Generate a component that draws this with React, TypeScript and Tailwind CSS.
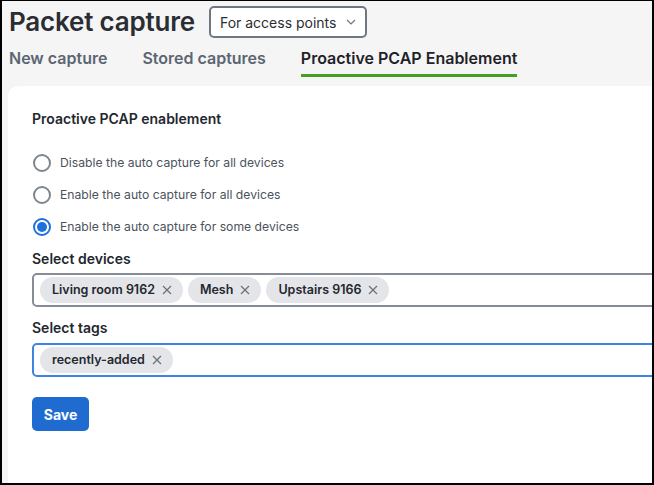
import React from "react";

const font = { fontFamily: "Inter, 'Noto Sans', sans-serif" };

const Chip = ({ label }: { label: string }) => (
  <span className="flex items-center h-[26px] pl-[12px] pr-[11px] gap-[7px] rounded-full bg-[#e3e5e8] text-[12.5px] font-semibold text-[#23272e]">
    {label}
    <svg width="10" height="10" viewBox="0 0 10 10" className="text-[#6b7178]">
      <path d="M1 1L9 9M9 1L1 9" stroke="currentColor" strokeWidth="1.2" />
    </svg>
  </span>
);

const Radio = ({ label, checked }: { label: string; checked?: boolean }) => (
  <label className="flex items-center gap-[9px] h-[20px] text-[12.2px] text-[#4b535c]">
    <span
      className={
        checked
          ? "ml-px w-[18px] h-[18px] rounded-full border-2 border-[#1f6fdc] flex items-center justify-center"
          : "ml-px w-[18px] h-[18px] rounded-full border-2 border-[#7e858d]"
      }
    >
      {checked && <span className="w-[10px] h-[10px] rounded-full bg-[#1f6fdc]" />}
    </span>
    {label}
  </label>
);

const App = () => {
  const tabs = ["New capture", "Stored captures", "Proactive PCAP Enablement"];

  return (
    <div
      style={font}
      className="w-[654px] h-[485px] overflow-hidden border-black border-t border-l-2 border-r-2 border-b-2 bg-[#f5f5f5] flex flex-col"
    >
      <div className="flex items-center gap-[14px] pt-[5px] pl-[7px]">
        <h1 className="text-[26px] leading-[32px] font-semibold text-[#2a2e33] tracking-[-0.2px]">
          Packet capture
        </h1>
        <button className="flex items-center gap-[10px] h-[32px] px-[9px] rounded-[5px] border-2 border-[#6f7782] bg-white text-[14px] text-[#2a2e33]">
          For access points
          <svg width="10" height="6" viewBox="0 0 10 6" className="text-[#6f7782]">
            <path d="M1 1l4 4 4-4" fill="none" stroke="currentColor" strokeWidth="1.2" />
          </svg>
        </button>
      </div>

      <ul className="flex gap-[35px] pl-[7px] mt-[10px]">
        {tabs.map((t, i) => (
          <li
            key={t}
            className={
              i === 2
                ? "text-[16px] leading-[20px] font-semibold text-[#1f2328] pb-[6px] border-b-[3px] border-[#44a01f]"
                : "text-[16px] leading-[20px] font-semibold text-[#5c6672] pb-[6px] border-b-[3px] border-transparent"
            }
          >
            {t}
          </li>
        ))}
      </ul>

      <div className="flex-1 ml-[6px] mt-[9px] w-[720px] bg-white rounded-tl-[10px] pl-[24px] pt-[24px] flex flex-col">
        <h2 className="text-[14px] leading-[18px] font-semibold text-[#23272e]">
          Proactive PCAP enablement
        </h2>

        <div className="flex flex-col gap-[12px] mt-[25px]">
          <Radio label="Disable the auto capture for all devices" />
          <Radio label="Enable the auto capture for all devices" />
          <Radio label="Enable the auto capture for some devices" checked />
        </div>

        <p className="mt-[13px] text-[14px] leading-[18px] font-semibold text-[#23272e]">
          Select devices
        </p>
        <div className="mt-[5px] h-[34px] flex items-center gap-[5px] pl-[6px] border-2 border-[#878d96] rounded-l-[5px]">
          <Chip label="Living room 9162" />
          <Chip label="Mesh" />
          <Chip label="Upstairs 9166" />
        </div>

        <p className="mt-[12px] text-[14px] leading-[18px] font-semibold text-[#23272e]">
          Select tags
        </p>
        <div className="mt-[6px] h-[34px] flex items-center gap-[5px] pl-[6px] border-2 border-[#3f84e0] rounded-l-[5px]">
          <Chip label="recently-added" />
        </div>

        <div>
          <button className="mt-[20px] h-[34px] w-[57px] rounded-[5px] bg-[#1f6bd0] text-white text-[14px] font-bold">
            Save
          </button>
        </div>
      </div>
    </div>
  );
};

export default App;
